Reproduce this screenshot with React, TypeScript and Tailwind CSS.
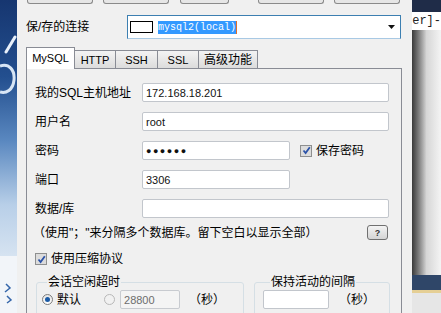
import React from 'react';

const TOP_BUTTONS = [
  'ml-px w-[66px]',
  'ml-[10px] w-[66px]',
  'ml-[11px] w-[49px]',
  'ml-[29px] w-[66px]',
  'ml-[10px] w-[66px]',
];

const TABS = [
  { label: 'MySQL', w: 'w-[49px] border-l', active: true },
  { label: 'HTTP', w: 'w-[41px]', active: false },
  { label: 'SSH', w: 'w-[42px]', active: false },
  { label: 'SSL', w: 'w-[41px]', active: false },
  { label: '高级功能', w: 'w-[59px]', active: false },
];

function Wallpaper() {
  return (
    <svg width="17" height="313" viewBox="0 0 17 313" className="shrink-0">
      <defs>
        <linearGradient id="wp" x1="0" y1="0" x2="0" y2="1">
          <stop offset="0" stopColor="#163670" />
          <stop offset="0.3" stopColor="#234f8f" />
          <stop offset="0.55" stopColor="#5a88c0" />
          <stop offset="0.8" stopColor="#b8cfe8" />
          <stop offset="1" stopColor="#d6e3f1" />
        </linearGradient>
      </defs>
      <rect width="17" height="256" fill="url(#wp)" />
      <rect y="256" width="17" height="57" fill="#f2f5f9" />
      <path d="M6 52 L15 37" stroke="#e8f0fa" strokeWidth="3" strokeLinecap="round" />
      <path d="M0 66 C9 63 15 70 14 80 C13 90 6 94 0 92" stroke="#d7e5f5" strokeWidth="3" fill="none" />
      <path d="M6 284 L10 288 L5 292 M7 296 L11 300 L7 303" stroke="#3566aa" strokeWidth="1.5" fill="none" />
    </svg>
  );
}

function RightStrip() {
  return (
    <div className="flex h-[313px] w-[29px] shrink-0">
      <div className="w-px bg-[#8e8f8f]" />
      <div className="w-[5px] bg-gradient-to-r from-[#dcedfb] to-[#a8cff0]" />
      <div className="w-px bg-[#6d7a86]" />
      <div className="flex flex-1 flex-col">
        <div className="h-[12px] bg-[#1f2c48]" />
        <div className="h-[18px] bg-white font-['Liberation_Mono',monospace] text-[12px] leading-[18px] text-[#222]">er]-</div>
        <div className="h-[245px] bg-gradient-to-r from-[#3a3a3a] via-[#d6d6d6] to-[#f4f4f4]" />
        <div className="h-[15px] bg-[#2f4668]" />
        <div className="h-[3px] bg-[#e5cf95]" />
        <div className="flex-1 bg-[#e6e6e6]" />
      </div>
    </div>
  );
}

function TextBox({ className, children }: { className: string; children?: React.ReactNode }) {
  return (
    <div className={`flex h-[19px] items-center rounded-[2px] border border-[#c2c6cc] bg-white pl-[3px] text-[11px] text-[#111] ${className}`}>
      {children}
    </div>
  );
}

function CheckBox() {
  return (
    <div className="flex h-[12px] w-[12px] shrink-0 items-center justify-center border border-[#8e8f8f] bg-[#dcdcdc]">
      <svg width="9" height="9" viewBox="0 0 9 9">
        <path d="M1.5 4.5 L3.6 7 L7.8 1.2" stroke="#2a52a8" strokeWidth="1.8" fill="none" />
      </svg>
    </div>
  );
}

function Radio({ checked }: { checked: boolean }) {
  return (
    <div
      className={`flex h-[11px] w-[11px] shrink-0 items-center justify-center rounded-full border ${
        checked ? 'border-[#7d7d7d] bg-gradient-to-b from-[#e4e4e4] to-white' : 'border-[#b8b8b8] bg-[#f1f1f1]'
      }`}
    >
      {checked && <div className="h-[5px] w-[5px] rounded-full bg-[#1a5aa6]" />}
    </div>
  );
}

function FieldRow({ label, children }: { label: string; children: React.ReactNode }) {
  return (
    <div className="flex h-[19px] items-center">
      <div className="w-[107px]">{label}</div>
      {children}
    </div>
  );
}

export default function App() {
  return (
    <div className="flex h-[313px] w-[441px] overflow-hidden bg-[#f0f0f0] font-['Liberation_Sans','Noto_Sans_CJK_SC',sans-serif] text-[12px] leading-[14px] text-black">
      <Wallpaper />

      {/* Dialog */}
      <div className="flex w-[395px] shrink-0 flex-col pl-[9px]">
        {/* bottoms of the buttons above */}
        <div className="flex h-[5px]">
          {TOP_BUTTONS.map((c, i) => (
            <div key={i} className={`h-[4px] rounded-b-[3px] border-x border-b border-[#8a8a8a] bg-[#e6e6e6] ${c}`} />
          ))}
        </div>

        {/* Saved connection */}
        <div className="mt-[11px] flex h-[24px] items-center">
          <div className="w-[101px]">保/存的连接</div>
          <div className="flex h-[24px] w-[274px] items-center border border-[#3c7fb1] border-b-[#a8c9e4] bg-white">
            <div className="ml-[2px] h-[12px] w-[23px] border border-black bg-white" />
            <div className="ml-[5px] border-r border-[#e0702a] bg-[#3399ff] font-['Liberation_Mono',monospace] text-[10px] leading-[13px] text-white">
              mysql2(local)
            </div>
            <svg width="7" height="4" viewBox="0 0 7 4" className="ml-auto mr-[5px]">
              <path d="M0 0 H7 L3.5 4 Z" fill="#111" />
            </svg>
          </div>
        </div>

        {/* Tabs */}
        <div className="mt-[8px] flex h-[21px] items-end">
          {TABS.map(t =>
            t.active ? (
              <div
                key={t.label}
                className={`relative z-10 -mb-px flex h-[22px] items-start justify-center border-t border-r border-[#898c95] bg-white pt-[3px] text-[11px] ${t.w}`}
              >
                {t.label}
              </div>
            ) : (
              <div
                key={t.label}
                className={`flex h-[18px] items-center justify-center border-t border-r border-[#898c95] bg-gradient-to-b from-[#f3f3f3] to-[#dcdcdc] pt-px ${t.label === '高级功能' ? 'text-[12px]' : 'text-[11px]'} ${t.w}`}
              >
                {t.label}
              </div>
            )
          )}
        </div>

        {/* Tab panel */}
        <div className="flex w-[376px] flex-1 flex-col border-x border-t border-[#898c95] pl-[8px] pt-[14px]">
          <div className="flex flex-col gap-[10px]">
            <FieldRow label="我的SQL主机地址">
              <TextBox className="w-[247px]">172.168.18.201</TextBox>
            </FieldRow>
            <FieldRow label="用户名">
              <TextBox className="w-[247px]">root</TextBox>
            </FieldRow>
            <FieldRow label="密码">
              <TextBox className="w-[148px]">
                <span className="text-[9px] tracking-[1.5px]">●●●●●●</span>
              </TextBox>
              <div className="ml-[10px]">
                <CheckBox />
              </div>
              <div className="ml-[4px]">保存密码</div>
            </FieldRow>
            <FieldRow label="端口">
              <TextBox className="w-[148px]">3306</TextBox>
            </FieldRow>
            <FieldRow label="数据/库">
              <TextBox className="w-[247px]" />
            </FieldRow>
          </div>

          {/* Hint */}
          <div className="mt-[7px] flex h-[15px] w-[353px] items-center justify-between">
            <div className="-ml-[2px]">（使用"；"来分隔多个数据库。留下空白以显示全部）</div>
            <div className="flex h-[15px] w-[21px] items-center justify-center rounded-[3px] border border-[#707070] bg-gradient-to-b from-[#f4f4f4] to-[#d4d4d4] text-[9px] font-bold text-[#333]">
              ?
            </div>
          </div>

          {/* Compression */}
          <div className="mt-[12px] flex h-[14px] items-center">
            <CheckBox />
            <div className="ml-[4px]">使用压缩协议</div>
          </div>

          {/* Timeouts */}
          <div className="ml-px mt-[9px] flex gap-[10px]">
            <fieldset className="w-[208px] rounded-[3px] border border-[#d5dfe5] pl-[5px] pb-[8px]">
              <legend className="ml-[5px] px-px">会话空闲超时</legend>
              <div className="mt-px flex h-[19px] items-center">
                <Radio checked />
                <div className="ml-[4px]">默认</div>
                <div className="ml-[23px]">
                  <Radio checked={false} />
                </div>
                <div className="ml-[5px] flex h-[19px] w-[60px] items-center rounded-[2px] border border-[#c8cbd0] bg-[#f4f4f4] pl-[3px] text-[11px] text-[#6d6d6d]">
                  28800
                </div>
                <div className="ml-[9px]">（秒）</div>
              </div>
            </fieldset>
            <fieldset className="w-[136px] rounded-[3px] border border-[#d5dfe5] pl-[8px] pb-[8px]">
              <legend className="ml-[7px] px-px">保持活动的间隔</legend>
              <div className="mt-px flex h-[19px] items-center">
                <TextBox className="w-[66px]" />
                <div className="ml-[10px]">（秒）</div>
              </div>
            </fieldset>
          </div>
        </div>
      </div>

      <RightStrip />
    </div>
  );
}
